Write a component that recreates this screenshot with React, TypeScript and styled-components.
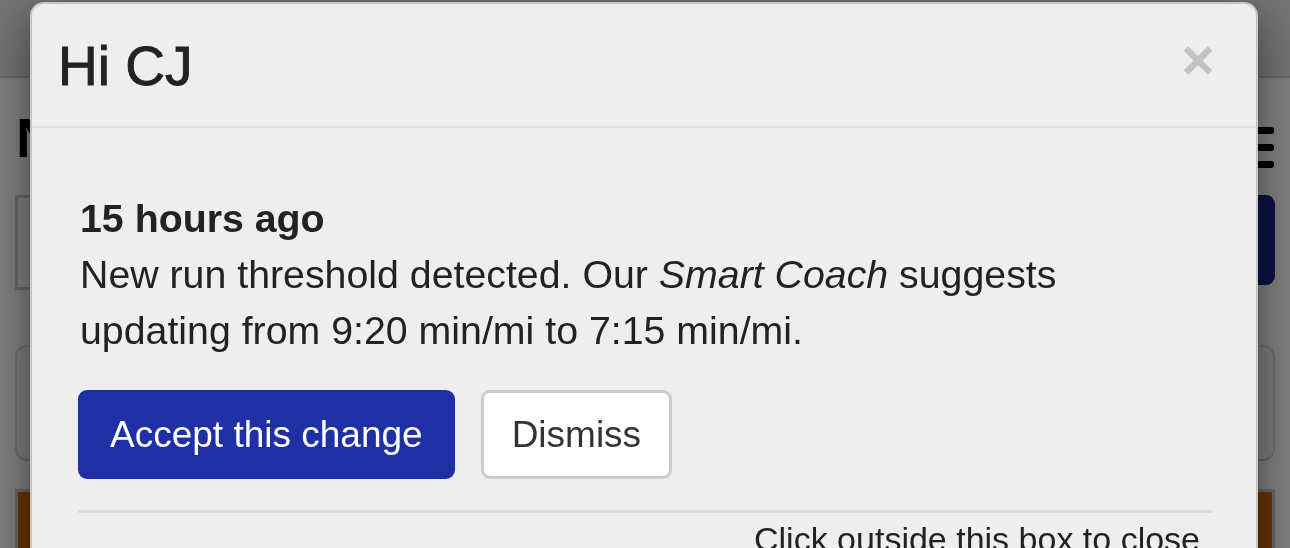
import React from 'react';
import styled, { createGlobalStyle } from 'styled-components';

const GlobalStyle = createGlobalStyle`
  html, body {
    margin: 0;
    padding: 0;
    overflow: hidden;
    background: #ffffff;
    font-family: "Liberation Sans", Arial, sans-serif;
  }
`;

// page behind the backdrop
const Page = styled.div`
  width: 1290px;
  height: 548px;
  overflow: hidden;
`;

const TopBar = styled.div`
  height: 76px;
  background: #e8e8e8;
  border-bottom: 2px solid #cccccc;
`;

const Content = styled.div`
  padding: 0 15px;
  display: flex;
  flex-direction: column;
`;

const HeadingRow = styled.div`
  display: flex;
  justify-content: space-between;
  align-items: flex-start;
  margin-top: 29px;
  height: 62px;
`;

const PageTitle = styled.h1`
  margin: 0;
  font-size: 56px;
  line-height: 62px;
  font-weight: 700;
  color: #000;
  padding-left: 1px;
`;

const Burger = styled.div`
  display: flex;
  flex-direction: column;
  gap: 10px;
  margin-top: 20px;
  margin-right: 1px;
`;

const BurgerBar = styled.span`
  display: block;
  width: 40px;
  height: 7px;
  border-radius: 3px;
  background: #000;
`;

const SearchRow = styled.div`
  display: flex;
  justify-content: space-between;
  align-items: flex-start;
  margin-top: 26px;
`;

const SearchInput = styled.div`
  width: 600px;
  height: 89px;
  border: 3px solid #cccccc;
  background: #fff;
`;

const SearchButton = styled.div`
  width: 200px;
  height: 90px;
  border-radius: 9px;
  background: #18288f;
`;

const Card = styled.div`
  margin-top: 55px;
  height: 112px;
  border: 2px solid #dddddd;
  border-bottom-color: #cccccc;
  border-radius: 12px;
  background: #fafafa;
`;

const OrangeBlock = styled.div`
  margin-top: 28px;
  height: 80px;
  border: 3px solid #cccccc;
  background: #d76600;
`;

// modal
const Backdrop = styled.div`
  position: fixed;
  inset: 0;
  background: rgba(0, 0, 0, 0.5);
  display: flex;
  justify-content: center;
  align-items: flex-start;
  padding-top: 2px;
`;

const Modal = styled.div`
  width: 1228px;
  margin-left: -2px;
  box-sizing: border-box;
  background: #eeeeee;
  border: 2px solid #c6c6c6;
  border-radius: 14px;
  box-shadow: 0 15px 45px rgba(0, 0, 0, 0.5);
  height: 700px;
`;

const ModalHeader = styled.div`
  display: flex;
  justify-content: space-between;
  align-items: flex-start;
  padding: 33px 43px 30px 26px;
  border-bottom: 2px solid #e2e2e2;
`;

const ModalTitle = styled.h4`
  margin: 0;
  font-size: 55px;
  line-height: 59px;
  font-weight: 400;
  color: #222;
  -webkit-text-stroke: 0.9px #222;
`;

const CloseButton = styled.button`
  margin-top: 9px;
  padding: 0;
  border: 0;
  background: transparent;
  display: flex;
`;

const ModalBody = styled.div`
  padding: 62px 44px 0 48px;
  color: #222;
  font-size: 39.3px;
  line-height: 56px;
`;

const When = styled.div`
  font-weight: 700;
`;

const Message = styled.p`
  margin: 0;
  max-width: 1060px;
`;

const Actions = styled.div`
  display: flex;
  gap: 26px;
  margin-top: 32px;
  margin-left: -2px;
`;

const Button = styled.button<{ $primary?: boolean }>`
  height: 89px;
  box-sizing: border-box;
  padding: 0 ${p => (p.$primary ? 29 : 28)}px;
  border-radius: 9px;
  border: 3px solid ${p => (p.$primary ? '#1f2fa6' : '#cccccc')};
  background: ${p => (p.$primary ? '#1f2fa6' : '#ffffff')};
  color: ${p => (p.$primary ? '#ffffff' : '#333333')};
  font-family: "Liberation Sans", Arial, sans-serif;
  font-size: 37px;
  line-height: 52px;
`;

const Divider = styled.hr`
  margin: 31px 0 0 -2px;
  border: 0;
  border-top: 3px solid #dcdcdc;
`;

const Hint = styled.div`
  text-align: right;
  padding-right: 12px;
  margin-top: 2px;
  font-size: 34px;
  line-height: 48px;
  color: #222;
`;

const CloseIcon = () => (
  <svg width="30" height="29" viewBox="0 0 30 29">
    <path d="M3 2.5 L27 26.5 M27 2.5 L3 26.5" stroke="#c2c2c2" strokeWidth="6.5" strokeLinecap="butt" />
  </svg>
);

export default function App() {
  return (
    <>
      <GlobalStyle />
      <Page>
        <TopBar />
        <Content>
          <HeadingRow>
            <PageTitle>N</PageTitle>
            <Burger>
              <BurgerBar />
              <BurgerBar />
              <BurgerBar />
            </Burger>
          </HeadingRow>
          <SearchRow>
            <SearchInput />
            <SearchButton />
          </SearchRow>
          <Card />
          <OrangeBlock />
        </Content>
      </Page>

      <Backdrop>
        <Modal>
          <ModalHeader>
            <ModalTitle>Hi CJ</ModalTitle>
            <CloseButton aria-label="Close">
              <CloseIcon />
            </CloseButton>
          </ModalHeader>
          <ModalBody>
            <When>15 hours ago</When>
            <Message>
              New run threshold detected. Our <em>Smart Coach</em> suggests updating from 9:20 min/mi to 7:15 min/mi.
            </Message>
            <Actions>
              <Button $primary>Accept this change</Button>
              <Button>Dismiss</Button>
            </Actions>
            <Divider />
            <Hint>Click outside this box to close</Hint>
          </ModalBody>
        </Modal>
      </Backdrop>
    </>
  );
}
